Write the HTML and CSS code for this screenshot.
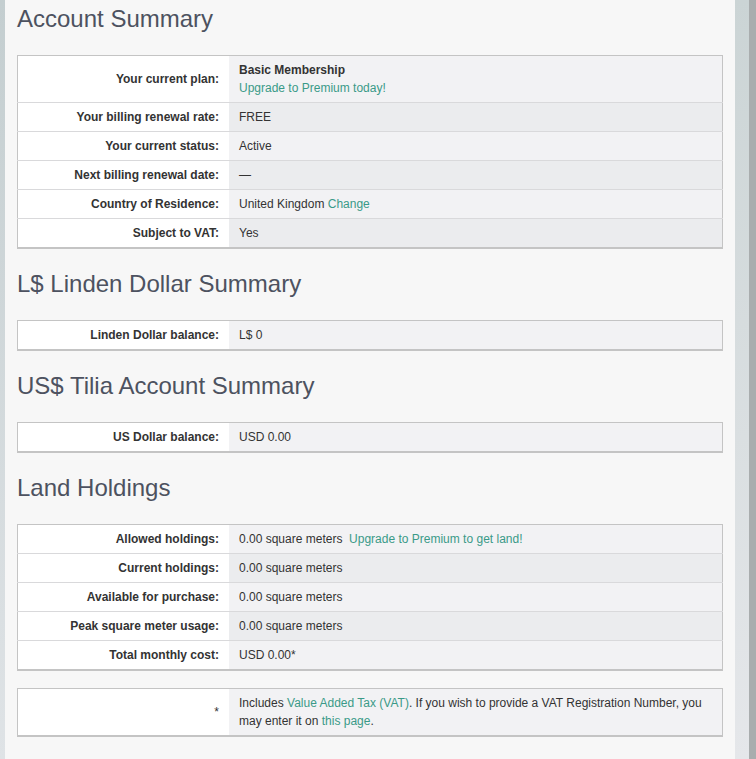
FILE: index.html
```html
<!DOCTYPE html>
<html lang="en">
<head>
    <meta charset="UTF-8">
    <title>Account Summary</title>
    <link rel="stylesheet" href="styles.css">
</head>
<body>
    <div class="edge-left"></div>

    <div class="content">
        <h2>Account Summary</h2>
        <table class="summary">
            <tr>
                <th>Your current plan:</th>
                <td><strong>Basic Membership</strong><br><a href="#">Upgrade to Premium today!</a></td>
            </tr>
            <tr>
                <th>Your billing renewal rate:</th>
                <td>FREE</td>
            </tr>
            <tr>
                <th>Your current status:</th>
                <td>Active</td>
            </tr>
            <tr>
                <th>Next billing renewal date:</th>
                <td>&mdash;</td>
            </tr>
            <tr>
                <th>Country of Residence:</th>
                <td>United Kingdom <a href="#">Change</a></td>
            </tr>
            <tr>
                <th>Subject to VAT:</th>
                <td>Yes</td>
            </tr>
        </table>

        <h2>L$ Linden Dollar Summary</h2>
        <table class="summary">
            <tr>
                <th>Linden Dollar balance:</th>
                <td>L$ 0</td>
            </tr>
        </table>

        <h2>US$ Tilia Account Summary</h2>
        <table class="summary">
            <tr>
                <th>US Dollar balance:</th>
                <td>USD 0.00</td>
            </tr>
        </table>

        <h2>Land Holdings</h2>
        <table class="summary">
            <tr>
                <th>Allowed holdings:</th>
                <td>0.00 square meters &nbsp;<a href="#">Upgrade to Premium to get land!</a></td>
            </tr>
            <tr>
                <th>Current holdings:</th>
                <td>0.00 square meters</td>
            </tr>
            <tr>
                <th>Available for purchase:</th>
                <td>0.00 square meters</td>
            </tr>
            <tr>
                <th>Peak square meter usage:</th>
                <td>0.00 square meters</td>
            </tr>
            <tr>
                <th>Total monthly cost:</th>
                <td>USD 0.00*</td>
            </tr>
        </table>

        <table class="summary footnote">
            <tr>
                <th class="plain">*</th>
                <td>Includes <a href="#">Value Added Tax (VAT)</a>. If you wish to provide a VAT Registration Number, you may enter it on <a href="#">this page</a>.</td>
            </tr>
        </table>
    </div>

    <div class="edge-right"></div>
    <div class="scrollbar"></div>
</body>
</html>
```

FILE: styles.css
```css
:root {
    --page-bg: #f7f7f7;
    --heading: #4d5260;
    --text: #333333;
    --link: #3a9a88;
    --border: #c4c4c4;
    --row-line: #d9d9db;
    --cell-a: #f2f2f4;
    --cell-b: #ebecee;
}

html, body {
    height: 100%;
}

body {
    margin: 0;
    display: flex;
    overflow: hidden;
    background: var(--page-bg);
    font-family: "Liberation Sans", Arial, sans-serif;
    font-size: 12px;
    color: var(--text);
}

.edge-left {
    width: 5px;
    flex: none;
    background: linear-gradient(180deg, #c4ced0 0%, #dfe3e6 100%);
}

.content {
    width: 706px;
    flex: none;
    padding: 6px 12px 0;
    background: var(--page-bg);
}

.edge-right {
    width: 14px;
    flex: none;
    background: linear-gradient(180deg, #cbd4d5 0%, #e5e7ea 100%);
}

.scrollbar {
    width: 7px;
    flex: none;
    background: #a9adae;
}

h2 {
    margin: 0 0 23px;
    font-size: 24px;
    line-height: 26px;
    font-weight: normal;
    color: var(--heading);
}

.summary + h2 {
    margin-top: 22px;
}

.summary {
    width: 100%;
    border-collapse: collapse;
    border: 1px solid var(--border);
    border-bottom-width: 2px;
}

.summary th,
.summary td {
    padding: 5px 10px;
    line-height: 18px;
    vertical-align: middle;
}

.summary tr + tr th,
.summary tr + tr td {
    border-top: 1px solid var(--row-line);
}

.summary th {
    width: 191px;
    text-align: right;
    font-weight: bold;
    background: #ffffff;
    white-space: nowrap;
}

.summary th.plain {
    font-weight: normal;
}

.summary td {
    background: var(--cell-a);
}

.summary tr:nth-child(even) td {
    background: var(--cell-b);
}

.summary td strong {
    font-weight: bold;
}

a {
    color: var(--link);
    text-decoration: none;
}

.footnote {
    margin-top: 17px;
}
```
